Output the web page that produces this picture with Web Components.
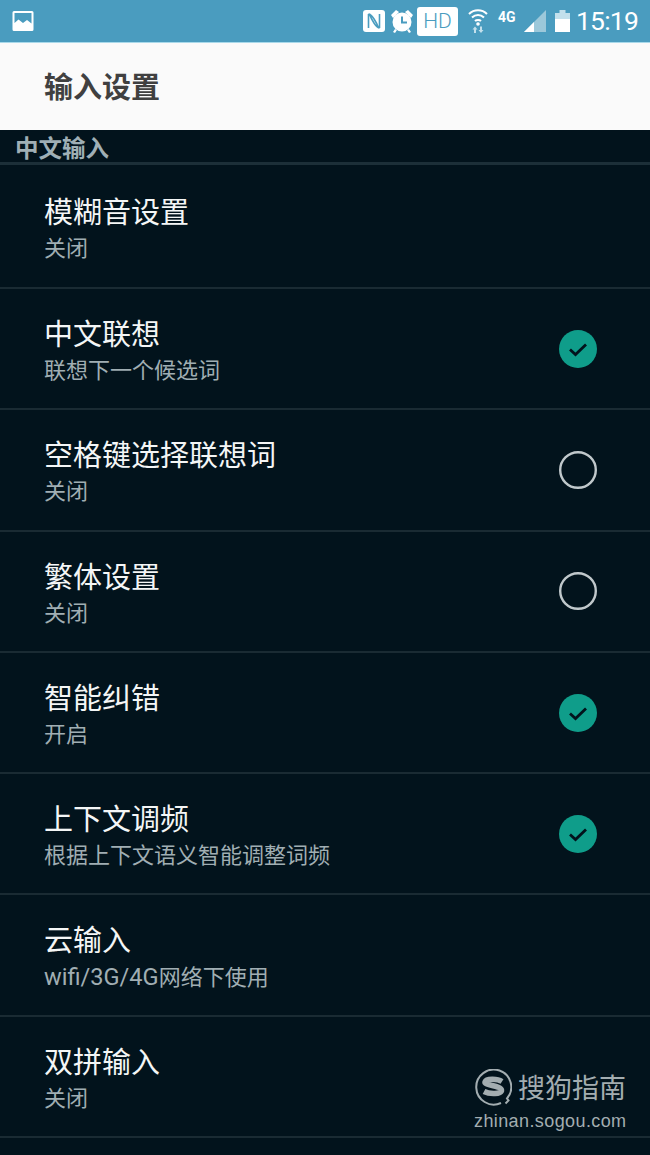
<!DOCTYPE html>
<html lang="zh">
<head>
<meta charset="utf-8">
<title>输入设置</title>
<style>
  html, body { margin: 0; padding: 0; background: #02131c; }
  body { width: 650px; height: 1155px; overflow: hidden; position: relative; font-family: Roboto, "Noto Sans CJK SC", sans-serif; }
</style>
</head>
<body>
<status-bar></status-bar>
<app-bar>输入设置</app-bar>
<section-head>中文输入</section-head>
<setting-row first title-text="模糊音设置" sub="关闭"></setting-row>
<setting-row title-text="中文联想" sub="联想下一个候选词" state="on"></setting-row>
<setting-row title-text="空格键选择联想词" sub="关闭" state="off"></setting-row>
<setting-row title-text="繁体设置" sub="关闭" state="off"></setting-row>
<setting-row title-text="智能纠错" sub="开启" state="on"></setting-row>
<setting-row title-text="上下文调频" sub="根据上下文语义智能调整词频" state="on"></setting-row>
<setting-row title-text="云输入" sub="wifi/3G/4G网络下使用"></setting-row>
<setting-row title-text="双拼输入" sub="关闭"></setting-row>
<sogou-mark></sogou-mark>

<script>
const CJK = 'Roboto, "Noto Sans CJK SC", sans-serif';

class StatusBar extends HTMLElement {
  constructor() {
    super();
    this.attachShadow({ mode: "open" });
    this.shadowRoot.innerHTML = `
    <style>
    :host { display: flex; align-items: center; height: 43px; box-sizing: border-box; padding: 0 14px 0 12px; background: #4a9cbf; border-bottom: 1px solid #a9d9ea; color: #fff; font-family: ${CJK}; }
    .right { margin-left: auto; display: flex; align-items: center; }
    .hd { width: 41px; height: 29px; margin: 1px 10px 0 4px; background: #fff; color: #4a9cbf; border-radius: 3px; font-size: 21px; font-weight: 300; line-height: 29px; text-align: center; }
    .g { width: 17px; margin: -8px 9px 0 10px; font-size: 14px; font-weight: 700; line-height: 12px; white-space: nowrap; }
    .time { width: 60px; font-size: 26.500px; letter-spacing: -0.800px; margin-left: 6px; line-height: 30px; white-space: nowrap; }
    svg { display: block; }
    </style>
    <svg width="22" height="22" viewBox="0 0 22 22"><path fill="#fff" fill-rule="evenodd" d="M2 1h18a1.500 1.500 0 0 1 1.500 1.500v17a1.500 1.500 0 0 1-1.500 1.500H2a1.500 1.500 0 0 1-1.500-1.500v-17A1.500 1.500 0 0 1 2 1zM2.500 3v10l4-3.500 4.500 3.500 4-3 4.500 3.500V3z"/></svg>
    <div class="right">
      <svg width="22" height="22" viewBox="0 0 22 22"><rect width="22" height="22" rx="3" fill="#fff"/><path d="M5.500 4v14M5.500 4c3 0 8 8 10 14M16.500 18V4M16.500 18c-3 0-8-8-10-14" fill="none" stroke="#4a9cbf" stroke-width="1.600"/></svg>
      <svg style="margin-left:6px" width="22" height="25" viewBox="0 0 22 25"><circle cx="11" cy="13" r="9.500" fill="#fff"/><path d="M11 7.500v6h5" fill="none" stroke="#4a9cbf" stroke-width="2"/><path fill="#fff" d="M0 6l5-5 3 2-6 6zM22 6l-5-5-3 2 6 6zM4 20l2 1-2 3-2-1zM18 20l-2 1 2 3 2-1z"/></svg>
      <div class="hd">HD</div>
      <svg width="20" height="24" viewBox="0 0 20 24"><g fill="none" stroke="#fff" stroke-width="2"><path d="M1 5c5-5 13-5 18 0"/><path d="M4 8.500c3.500-3.500 8.500-3.500 12 0"/><path d="M7 12c1.500-1.500 4.500-1.500 6 0"/></g><circle cx="10" cy="15" r="1.800" fill="#fff"/><path fill="#c3e0ec" d="M7 17.500l2.500 3H8V24H6v-3.500H4.500zM13 24l2.500-3H14v-3.500h-2V21h-1.500z"/></svg>
      <span class="g">4G</span>
      <svg width="22" height="22" viewBox="0 0 22 22"><path fill="#9cc8da" d="M22 0v22H0z"/><path fill="#fff" d="M10 12v10H0z"/></svg>
      <svg style="margin-left:9px" width="15" height="22" viewBox="0 0 15 22"><path fill="#c3e0ec" d="M4.500 0h6v3h-6zM0 3h15v6H0z"/><path fill="#fff" d="M0 9h15v13H0z"/></svg>
      <span class="time">15:19</span>
    </div>`;
  }
}
customElements.define("status-bar", StatusBar);

class AppBar extends HTMLElement {
  constructor() {
    super();
    this.attachShadow({ mode: "open" });
    this.shadowRoot.innerHTML = `
    <style>
    :host { display: flex; align-items: center; box-sizing: border-box; height: 87px; padding: 0 0 4px 44px; background: #fafafa; color: #404040; font: 700 29px ${CJK}; }
    </style>
    <slot></slot>`;
  }
}
customElements.define("app-bar", AppBar);

class SectionHead extends HTMLElement {
  constructor() {
    super();
    this.attachShadow({ mode: "open" });
    this.shadowRoot.innerHTML = `
    <style>
    :host { display: block; height: 32px; padding-left: 15px; background: #02131c; border-bottom: 3px solid #1c2f38; color: #9fafb5; font: 700 23.500px/38px ${CJK}; overflow: hidden; }
    </style>
    <slot></slot>`;
  }
}
customElements.define("section-head", SectionHead);

class SettingRow extends HTMLElement {
  constructor() {
    super();
    this.attachShadow({ mode: "open" });
    this.shadowRoot.innerHTML = `
    <style>
    :host { display: flex; align-items: center; box-sizing: border-box; height: 121.300px; padding: 0 53px 0 44px; border-bottom: 2px solid #1a2b33; font-family: ${CJK}; }
    :host([first]) { height: 124px; }
    .text { flex: 1; padding-top: 6px; }
    .title { color: #f4f6f6; font-size: 29px; line-height: 38px; }
    .sub { color: #a0aeb3; font-size: 22px; line-height: 32px; margin-top: 1px; }
    .latin { font-size: 23.600px; }
    .state { width: 38px; height: 38px; display: none; }
    :host([state]) .state { display: block; }
    </style>
    <div class="text">
      <div class="title"></div>
      <div class="sub"></div>
    </div>
    <svg class="state" viewBox="0 0 38 38"></svg>`;
  }
  connectedCallback() {
    this.shadowRoot.querySelector('.title').textContent = this.getAttribute('title-text');
    // latin runs are a bit wider in the reference than Roboto at the same size
    this.shadowRoot.querySelector('.sub').innerHTML = this.getAttribute('sub').replace(/[\x21-\x7e]+/, '<span class="latin">$&</span>');
    const state = this.getAttribute('state');
    const svg = this.shadowRoot.querySelector('.state');
    if (state === "on") {
      svg.innerHTML = '<circle cx="19" cy="19" r="19" fill="#0f9d8a"/><path d="M11 19.500l5.500 5 10.500-10" fill="none" stroke="#02131c" stroke-width="2.800"/>';
    } else if (state === "off") {
      svg.innerHTML = '<circle cx="19" cy="19" r="17.800" fill="none" stroke="#c0c8cb" stroke-width="2.400"/>';
    }
  }
}
customElements.define("setting-row", SettingRow);

class SogouMark extends HTMLElement {
  constructor() {
    super();
    this.attachShadow({ mode: "open" });
    this.shadowRoot.innerHTML = `
    <style>
    :host { position: absolute; left: 474px; top: 1068px; width: 160px; color: #a3adb0; font-family: ${CJK}; }
    .top { display: flex; align-items: center; gap: 6px; height: 40px; }
    .name { font-size: 27px; line-height: 40px; white-space: nowrap; position: relative; top: 1px; }
    .url { font: 18px/22px "Liberation Sans", sans-serif; margin-top: 2px; letter-spacing: 0.400px; white-space: nowrap; }
    svg { display: block; }
    </style>
    <div class="top">
      <svg width="38" height="38" viewBox="0 0 38 38">
        <path d="M27 34A17.500 17.500 0 1 1 33 29.500l1.500 2-3 3" fill="none" stroke="#a3adb0" stroke-width="2"/>
        <path d="M28 12.500c-4-2.500-15.500-3.500-17 .5-1 3.500 16 3.500 16.500 8 .5 4.500-12 4.500-17.500 1.500" fill="none" stroke="#a3adb0" stroke-width="5.500"/>
      </svg>
      <span class="name">搜狗指南</span>
    </div>
    <div class="url">zhinan.sogou.com</div>`;
  }
}
customElements.define("sogou-mark", SogouMark);
</script>
</body>
</html>
